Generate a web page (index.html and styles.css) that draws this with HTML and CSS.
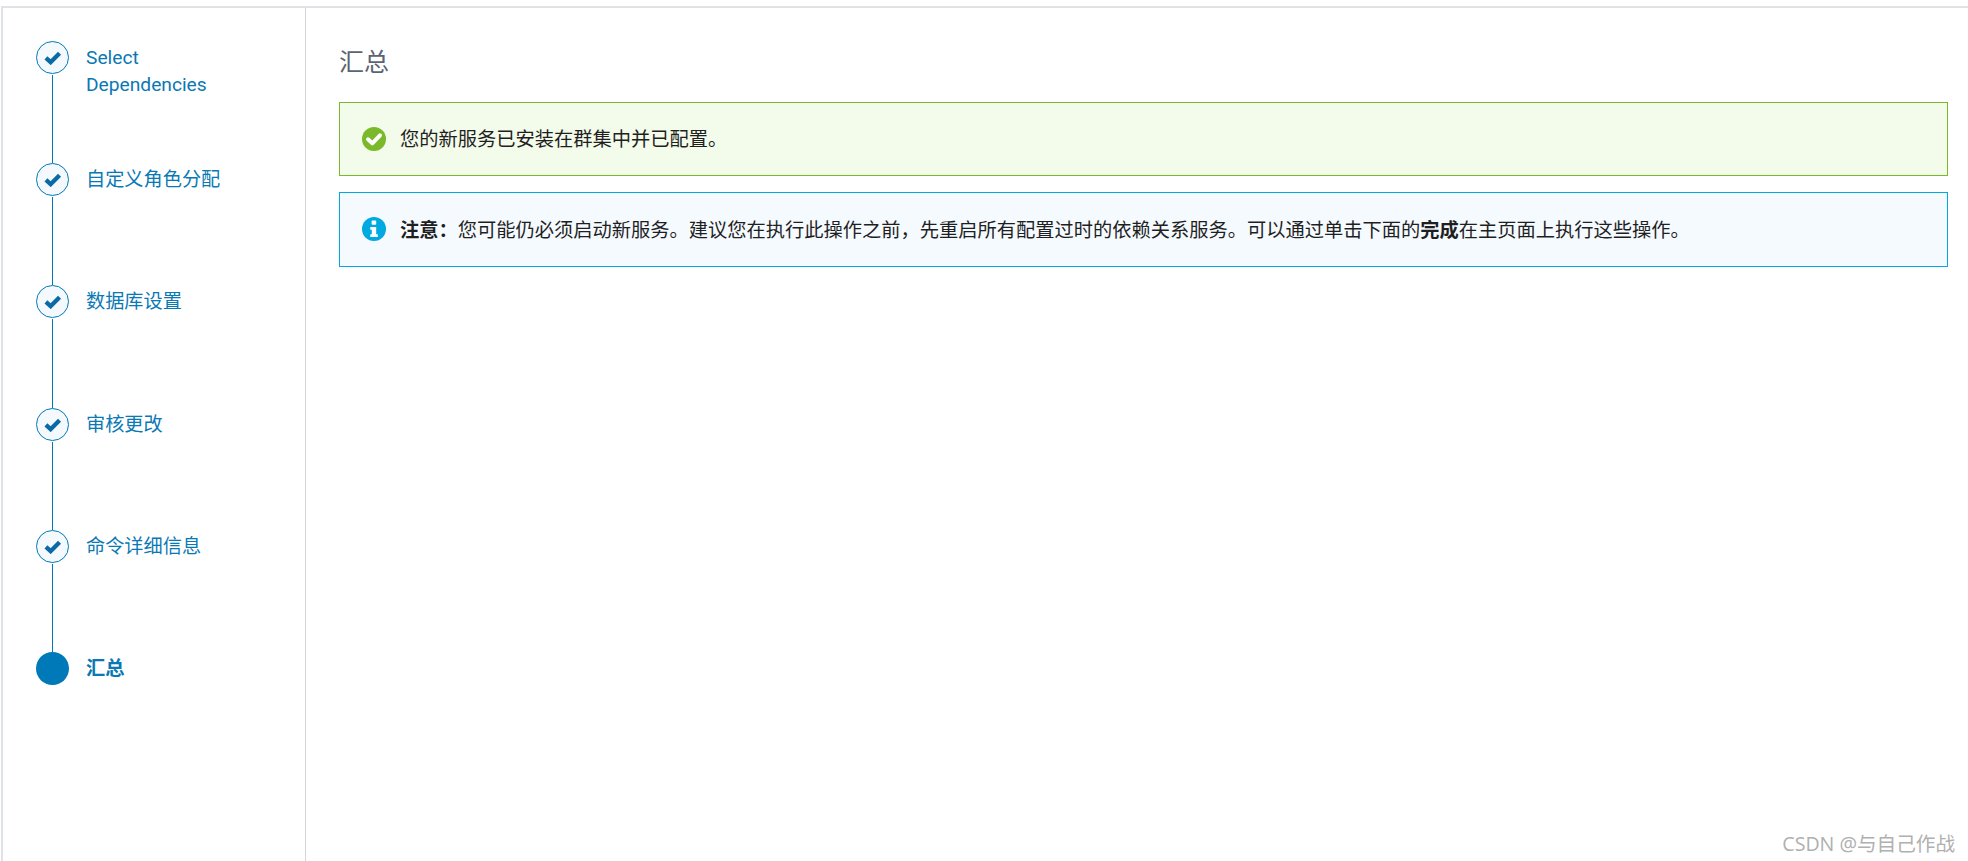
FILE: index.html
```html
<!DOCTYPE html>
<html lang="zh-CN">
<head>
<meta charset="utf-8">
<title>汇总</title>
<link rel="stylesheet" href="styles.css">
</head>
<body>
<div class="app">
  <nav class="steps">
    <div class="step">
      <div class="rail"><span class="dot done"><svg class="tick" viewBox="0 0 20 16"><path d="M3 8.5l5 4.5L17.5 3.5"/></svg></span><span class="line"></span></div>
      <a class="label">Select<br>Dependencies</a>
    </div>
    <div class="step">
      <div class="rail"><span class="dot done"><svg class="tick" viewBox="0 0 20 16"><path d="M3 8.5l5 4.5L17.5 3.5"/></svg></span><span class="line"></span></div>
      <a class="label">自定义角色分配</a>
    </div>
    <div class="step">
      <div class="rail"><span class="dot done"><svg class="tick" viewBox="0 0 20 16"><path d="M3 8.5l5 4.5L17.5 3.5"/></svg></span><span class="line"></span></div>
      <a class="label">数据库设置</a>
    </div>
    <div class="step">
      <div class="rail"><span class="dot done"><svg class="tick" viewBox="0 0 20 16"><path d="M3 8.5l5 4.5L17.5 3.5"/></svg></span><span class="line"></span></div>
      <a class="label">审核更改</a>
    </div>
    <div class="step">
      <div class="rail"><span class="dot done"><svg class="tick" viewBox="0 0 20 16"><path d="M3 8.5l5 4.5L17.5 3.5"/></svg></span><span class="line"></span></div>
      <a class="label">命令详细信息</a>
    </div>
    <div class="step">
      <div class="rail"><span class="dot current"></span></div>
      <a class="label active">汇总</a>
    </div>
  </nav>
  <main class="content">
    <h1 class="title">汇总</h1>
    <div class="alert success">
      <svg class="alert-icon" viewBox="0 0 24 24"><circle cx="12" cy="12" r="12" fill="#7ab929"/><path d="M6 12.3l4.3 4L18 8.3" fill="none" stroke="#fff" stroke-width="4" stroke-linecap="round" stroke-linejoin="round"/></svg>
      <p class="msg-up">您的新服务已安装在群集中并已配置。</p>
    </div>
    <div class="alert info">
      <svg class="alert-icon" viewBox="0 0 24 24"><circle cx="12" cy="12" r="12" fill="#00a9e0"/><rect x="9.6" y="3.6" width="4.6" height="4.2" rx="0.8" fill="#fff"/><path d="M8.3 10h5.9v7.2h1.6v2.7H8.3v-2.7h1.5v-4.5H8.3z" fill="#fff"/></svg>
      <p><strong>注意：</strong>您可能仍必须启动新服务。建议您在执行此操作之前，先重启所有配置过时的依赖关系服务。可以通过单击下面的<strong>完成</strong>在主页面上执行这些操作。</p>
    </div>
  </main>
</div>
<div class="watermark">CSDN @与自己作战</div>
</body>
</html>
```
FILE: styles.css
```css
* { box-sizing: border-box; }
html, body { height: 100%; }
body {
  margin: 0;
  background: #fff;
  color: #1f1f1f;
  font-family: Roboto, "Noto Sans CJK SC", sans-serif;
  font-size: 19.2px;
  overflow: hidden;
}
.app {
  display: flex;
  height: 861px;
  margin-top: 6px;
  margin-left: 1px;
  border-top: 2px solid #e0e2e5;
  border-left: 2px solid #dfe3e8;
}
.steps {
  flex: none;
  width: 303px;
  padding: 33px 0 0 33px;
  border-right: 1px solid #d3d6da;
}
.step {
  display: flex;
  height: 122.2px;
  gap: 17px;
}
.rail {
  flex: none;
  display: flex;
  flex-direction: column;
  align-items: center;
  width: 33px;
}
.dot {
  flex: none;
  display: flex;
  align-items: center;
  justify-content: center;
  width: 33px;
  height: 33px;
  border-radius: 50%;
}
.dot.done {
  background: #f4f9fd;
  border: 1px solid #0079b8;
}
.dot.current { background: #0079b8; }
.tick {
  width: 19px;
  height: 15px;
  fill: none;
  stroke: #0a6aa5;
  stroke-width: 4.6;
}
.line {
  flex: 1;
  width: 1px;
  margin-top: 1px;
  background: #0079b8;
}
.label {
  padding-top: 3px;
  color: #0a78b4;
  font-size: 19.2px;
  line-height: 27px;
}
.label.active { font-weight: 700; }
.content {
  flex: 1;
  padding: 0 20px 0 33px;
}
.title {
  margin: 40px 0 24px;
  height: 30px;
  color: #5b6472;
  font-size: 25px;
  font-weight: 400;
  line-height: 30px;
}
.alert {
  display: flex;
  align-items: center;
  gap: 14px;
  padding: 0 22px 1px;
  border: 1px solid;
}
.alert p { margin: 0; font-size: 19.25px; }
.alert .msg-up { margin-bottom: 2px; }
.alert-icon { flex: none; width: 24px; height: 24px; }
.success {
  height: 74px;
  margin-bottom: 16px;
  background: #f3fbea;
  border-color: #7ab929;
}
.info {
  height: 75px;
  background: #f5faff;
  border-color: #00a9e0;
}
.watermark {
  position: absolute;
  right: 13px;
  bottom: 5px;
  color: #b0b0b0;
  font-family: "Open Sans", "Noto Sans CJK SC", sans-serif;
  font-size: 19.6px;
  line-height: 24px;
}
```
